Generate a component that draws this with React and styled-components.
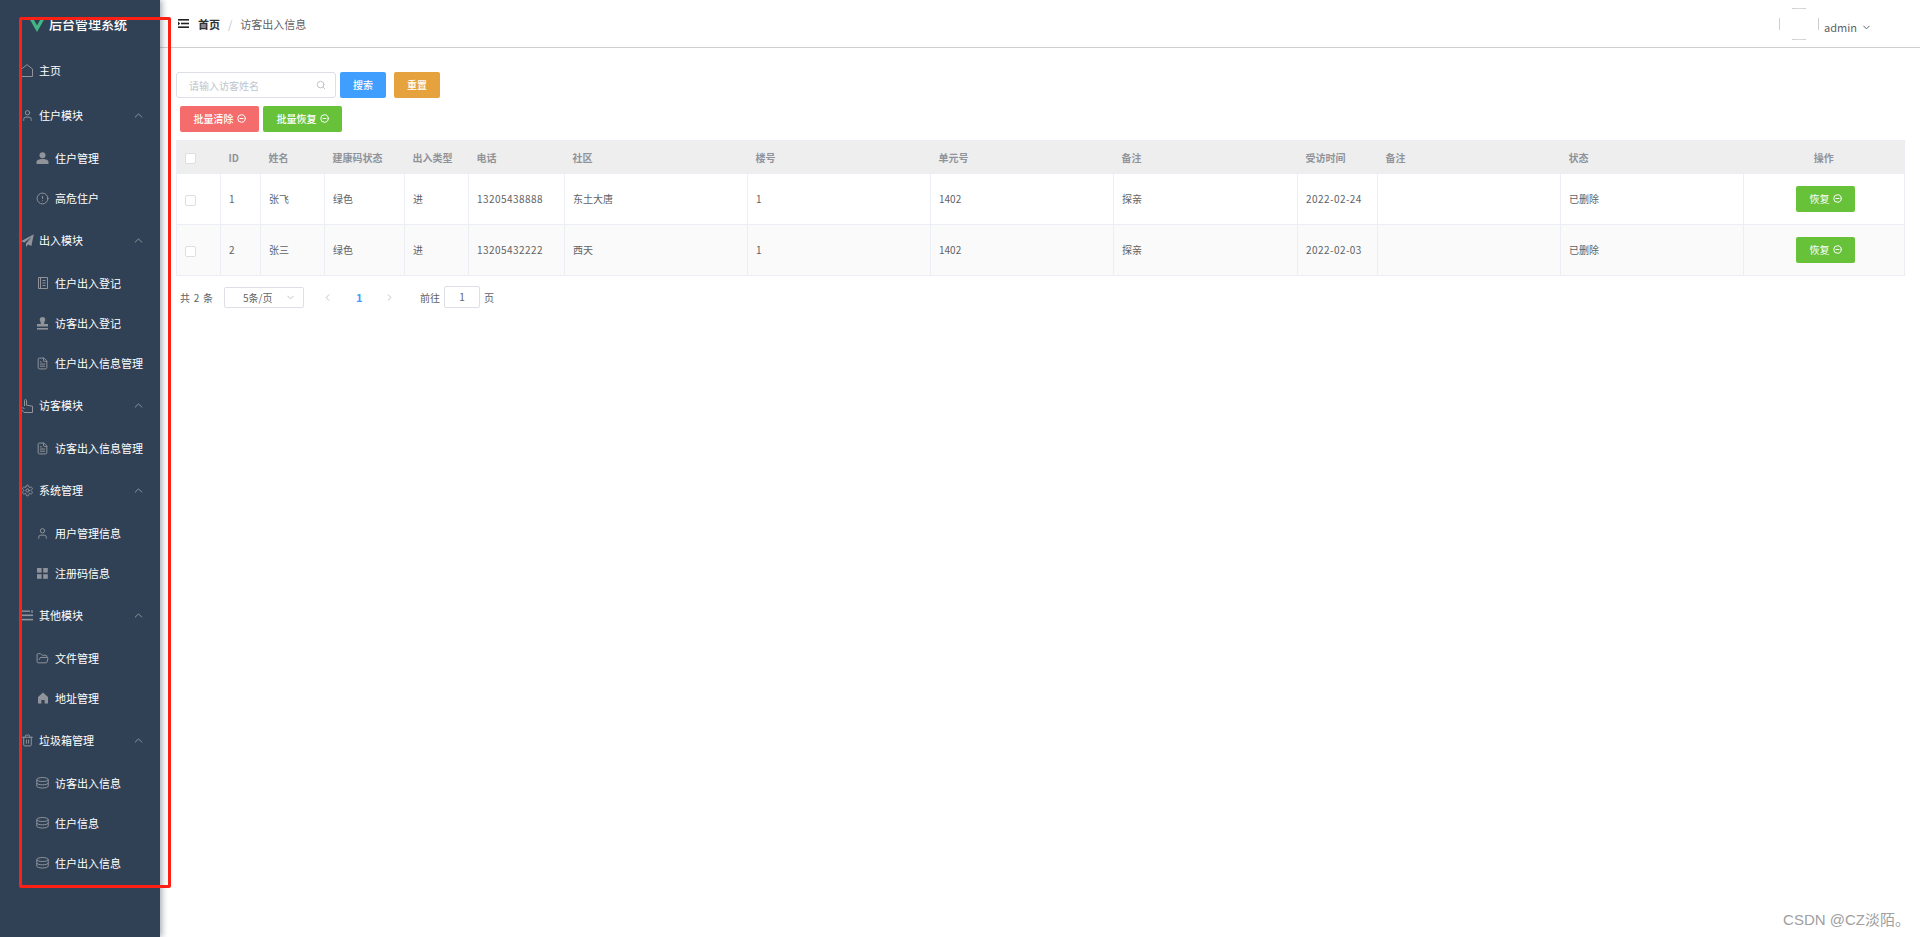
import React from "react";
import styled, { createGlobalStyle } from "styled-components";
import {
    ChevronUp,
    ChevronDown,
    ChevronLeft,
    ChevronRight,
    CircleAlert,
    CircleMinus,
    FileText,
    FolderOpen,
    Search,
    Settings,
    Trash2,
    User,
} from "lucide-react";

const HouseLine = () => (
    <svg width="13" height="13" viewBox="0 0 13 13" fill="none" stroke="currentColor">
        <path d="M0.5 12.5V5L6 0.7L11.5 5V12.5Z" />
    </svg>
);

const PersonFill = () => (
    <svg width="13" height="13" viewBox="0 0 13 13" fill="currentColor">
        <circle cx="6.5" cy="3.2" r="3" />
        <path d="M0.5 12V10C0.5 8 3 7 6.5 7S12.5 8 12.5 10V12Z" />
    </svg>
);

const PlaneFill = () => (
    <svg width="13" height="13" viewBox="0 0 13 13" fill="currentColor">
        <path d="M12.8 0.2L0 7.2L3.4 8.6L10.5 3L5 9.6V13L7 10.4L10.4 12Z" />
    </svg>
);

const Notebook = () => (
    <svg width="12" height="12" viewBox="0 0 12 12" fill="none" stroke="currentColor">
        <path d="M1.5 0.5H10.5V11.5H1.5ZM3.5 0.5V11.5M5.5 3.5H8.5M5.5 6H8.5M5.5 8.5H8.5" />
    </svg>
);

const StampFill = () => (
    <svg width="13" height="13" viewBox="0 0 13 13" fill="currentColor">
        <path d="M6.5 0C8.3 0 9.3 1.2 9.3 2.7C9.3 4 8.2 4.6 8.2 6V7H12V9.6H1V7H4.8V6C4.8 4.6 3.7 4 3.7 2.7C3.7 1.2 4.7 0 6.5 0Z" />
        <rect x="1" y="11" width="11" height="1.6" />
    </svg>
);

const ThumbLine = () => (
    <svg width="12" height="14" viewBox="0 0 12 14" fill="none" stroke="currentColor">
        <path d="M3.5 7V1.5C3.5 0.2 5.5 0.2 5.5 1.5V6.2L11.5 7.2V13.5H3L0.5 10.5V8.5L3.5 9.5" />
    </svg>
);

const GridFill = () => (
    <svg width="11" height="11" viewBox="0 0 11 11" fill="currentColor">
        <rect x="0" y="0" width="4.6" height="4.6" />
        <rect x="6.2" y="0" width="4.6" height="4.6" />
        <rect x="0" y="6.2" width="4.6" height="4.6" />
        <rect x="6.2" y="6.2" width="4.6" height="4.6" />
    </svg>
);

const BarsFill = () => (
    <svg width="12" height="11" viewBox="0 0 12 11" fill="currentColor">
        <rect x="0" y="0.5" width="9" height="1.4" />
        <rect x="10" y="0" width="2" height="3" opacity="0.6" />
        <rect x="0" y="4.5" width="12" height="1.6" />
        <rect x="0" y="8.8" width="12" height="1.6" />
    </svg>
);

const HomeFill = () => (
    <svg width="12" height="12" viewBox="0 0 12 12" fill="currentColor">
        <path d="M6 0.5L11 5V11.5H7.6V8H4.4V11.5H1V5Z" />
    </svg>
);

const Coins = () => (
    <svg width="13" height="12" viewBox="0 0 13 12" fill="none" stroke="currentColor">
        <ellipse cx="6.5" cy="2.5" rx="5.7" ry="2" />
        <path d="M0.8 2.5V9C0.8 10.2 3.3 11 6.5 11S12.2 10.2 12.2 9V2.5M0.8 5.8C0.8 7 3.3 7.8 6.5 7.8S12.2 7 12.2 5.8" />
    </svg>
);

const MenuToggle = () => (
    <svg width="11" height="9" viewBox="0 0 11 9" fill="#222">
        <rect x="0" y="0" width="11" height="1.6" />
        <rect x="3" y="3.7" width="8" height="1.6" />
        <path d="M0 2.6L2.2 4.5L0 6.4Z" />
        <rect x="0" y="7.4" width="11" height="1.6" />
    </svg>
);

// broken avatar image: only the four edge ticks of the circle show
const AvatarTicks = () => (
    <svg width="40" height="32" viewBox="0 0 40 32" fill="none" stroke="#cfcfcf">
        <path d="M13 0.5Q20 0 27 0.5M13 31.5Q20 32 27 31.5M0.5 10V22M39.5 10V22" />
    </svg>
);

const stroke = (Icon, size = 13) => <Icon size={size} strokeWidth={1} absoluteStrokeWidth />;

const menu = [
    { label: "主页", icon: <HouseLine /> },
    {
        label: "住户模块",
        icon: stroke(User),
        open: true,
        children: [
            { label: "住户管理", icon: <PersonFill /> },
            { label: "高危住户", icon: stroke(CircleAlert) },
        ],
    },
    {
        label: "出入模块",
        icon: <PlaneFill />,
        open: true,
        children: [
            { label: "住户出入登记", icon: <Notebook /> },
            { label: "访客出入登记", icon: <StampFill /> },
            { label: "住户出入信息管理", icon: stroke(FileText) },
        ],
    },
    {
        label: "访客模块",
        icon: <ThumbLine />,
        open: true,
        children: [{ label: "访客出入信息管理", icon: stroke(FileText) }],
    },
    {
        label: "系统管理",
        icon: stroke(Settings),
        open: true,
        children: [
            { label: "用户管理信息", icon: stroke(User) },
            { label: "注册码信息", icon: <GridFill /> },
        ],
    },
    {
        label: "其他模块",
        icon: <BarsFill />,
        open: true,
        children: [
            { label: "文件管理", icon: stroke(FolderOpen) },
            { label: "地址管理", icon: <HomeFill /> },
        ],
    },
    {
        label: "垃圾箱管理",
        icon: stroke(Trash2),
        open: true,
        children: [
            { label: "访客出入信息", icon: <Coins /> },
            { label: "住户信息", icon: <Coins /> },
            { label: "住户出入信息", icon: <Coins /> },
        ],
    },
];

const columns = [
    { key: "check", width: 44, label: "" },
    { key: "id", width: 40, label: "ID" },
    { key: "name", width: 64, label: "姓名" },
    { key: "health", width: 80, label: "建康码状态" },
    { key: "type", width: 64, label: "出入类型" },
    { key: "phone", width: 96, label: "电话", numeric: true },
    { key: "community", width: 183, label: "社区" },
    { key: "building", width: 183, label: "楼号" },
    { key: "unit", width: 183, label: "单元号" },
    { key: "remark", width: 184, label: "备注" },
    { key: "date", width: 80, label: "受访时间", numeric: true },
    { key: "note", width: 183, label: "备注" },
    { key: "status", width: 183, label: "状态" },
    { key: "action", width: 161, label: "操作" },
];

const rows = [
    {
        id: 1,
        name: "张飞",
        health: "绿色",
        type: "进",
        phone: "13205438888",
        community: "东土大唐",
        building: "1",
        unit: "1402",
        remark: "探亲",
        date: "2022-02-24",
        note: "",
        status: "已删除",
    },
    {
        id: 2,
        name: "张三",
        health: "绿色",
        type: "进",
        phone: "13205432222",
        community: "西天",
        building: "1",
        unit: "1402",
        remark: "探亲",
        date: "2022-02-03",
        note: "",
        status: "已删除",
    },
];

const App = () => {
    return (
        <Page>
            <GlobalStyle />
            <Sidebar>
                <Brand>
                    <LogoMark viewBox="0 0 16 14">
                        <path d="M0 0H16L8 14Z" fill="#41b883" />
                        <path d="M3.8 0H12.2L8 7.4Z" fill="#304156" />
                    </LogoMark>
                    <BrandTitle>后台管理系统</BrandTitle>
                </Brand>
                {menu.map((item) => (
                    <React.Fragment key={item.label}>
                        <MenuRow>
                            <MenuIcon>{item.icon}</MenuIcon>
                            <MenuLabel>{item.label}</MenuLabel>
                            {item.open && (
                                <MenuArrow>
                                    <ChevronUp size={13} strokeWidth={1} absoluteStrokeWidth />
                                </MenuArrow>
                            )}
                        </MenuRow>
                        {item.children &&
                            item.children.map((child) => (
                                <SubRow key={child.label}>
                                    <SubIcon>{child.icon}</SubIcon>
                                    <MenuLabel>{child.label}</MenuLabel>
                                </SubRow>
                            ))}
                    </React.Fragment>
                ))}
            </Sidebar>

            <Main>
                <Header>
                    <Crumbs>
                        <MenuToggle />
                        <CrumbHome>首页</CrumbHome>
                        <CrumbSlash>/</CrumbSlash>
                        <CrumbCurrent>访客出入信息</CrumbCurrent>
                    </Crumbs>
                    <UserBox>
                        <AvatarTicks />
                        <UserName>admin</UserName>
                        <UserArrow>
                            <ChevronDown size={11} strokeWidth={1} absoluteStrokeWidth />
                        </UserArrow>
                    </UserBox>
                </Header>

                <Content>
                    <SearchBar>
                        <SearchBox>
                            <SearchInput placeholder="请输入访客姓名" readOnly />
                            <Search size={10} strokeWidth={1} absoluteStrokeWidth color="#c0c4cc" />
                        </SearchBox>
                        <ActionButton $color="#409eff" $width={46}>
                            搜索
                        </ActionButton>
                        <ActionButton $color="#e6a23c" $width={46}>
                            重置
                        </ActionButton>
                    </SearchBar>

                    <BatchBar>
                        <ActionButton $color="#f56c6c" $width={79}>
                            批量清除 <CircleMinus size={9} strokeWidth={1} absoluteStrokeWidth />
                        </ActionButton>
                        <ActionButton $color="#67c23a" $width={79}>
                            批量恢复 <CircleMinus size={9} strokeWidth={1} absoluteStrokeWidth />
                        </ActionButton>
                    </BatchBar>

                    <Table>
                        <colgroup>
                            {columns.map((col) => (
                                <col key={col.key} width={col.width} />
                            ))}
                        </colgroup>
                        <thead>
                            <tr>
                                {columns.map((col) => (
                                    <HeadCell key={col.key} $center={col.key === "action"}>
                                        {col.key === "check" ? <CheckBox /> : col.label}
                                    </HeadCell>
                                ))}
                            </tr>
                        </thead>
                        <tbody>
                            {rows.map((row) => (
                                <BodyRow key={row.id}>
                                    {columns.map((col) => {
                                        if (col.key === "check") {
                                            return (
                                                <BodyCell key={col.key}>
                                                    <CheckBox />
                                                </BodyCell>
                                            );
                                        }
                                        if (col.key === "action") {
                                            return (
                                                <ActionCell key={col.key}>
                                                    <RowButton $color="#67c23a" $width={59}>
                                                        恢复 <CircleMinus size={9} strokeWidth={1} absoluteStrokeWidth />
                                                    </RowButton>
                                                </ActionCell>
                                            );
                                        }
                                        return (
                                            <BodyCell key={col.key} $numeric={col.numeric}>
                                                {row[col.key]}
                                            </BodyCell>
                                        );
                                    })}
                                </BodyRow>
                            ))}
                        </tbody>
                    </Table>

                    <Pager>
                        <PagerTotal>共 2 条</PagerTotal>
                        <SizeSelect>
                            <span>5条/页</span>
                            <ChevronDown size={11} strokeWidth={1} absoluteStrokeWidth color="#c0c4cc" />
                        </SizeSelect>
                        <PagerArrow $gap={8}>
                            <ChevronLeft size={11} strokeWidth={1} absoluteStrokeWidth />
                        </PagerArrow>
                        <PageNumber>1</PageNumber>
                        <PagerArrow $gap={12}>
                            <ChevronRight size={11} strokeWidth={1} absoluteStrokeWidth />
                        </PagerArrow>
                        <PagerJump>前往</PagerJump>
                        <JumpInput>1</JumpInput>
                        <PagerText>页</PagerText>
                    </Pager>
                </Content>
            </Main>

            <RedMark />
            <Watermark>CSDN @CZ淡陌。</Watermark>
        </Page>
    );
};

export default App;

const GlobalStyle = createGlobalStyle`
    html, body {
        margin: 0;
        padding: 0;
        background: #fff;
    }
    body {
        font-family: "Noto Sans CJK SC", "Noto Sans", sans-serif;
    }
`;

const Page = styled.div`
    position: relative;
    display: flex;
    width: 1920px;
    height: 937px;
    overflow: hidden;
`;

const Sidebar = styled.aside`
    position: relative;
    z-index: 1;
    width: 160px;
    flex-shrink: 0;
    background-color: #304156;
    box-shadow: 2px 0 6px rgba(0, 21, 41, 0.35);
`;

const Brand = styled.div`
    display: flex;
    align-items: center;
    gap: 4px;
    height: 48px;
    padding: 0 0 2px 29px;
    box-sizing: border-box;
`;

const LogoMark = styled.svg`
    width: 16px;
    height: 14px;
    margin-top: 4px;
`;

const BrandTitle = styled.span`
    font-size: 13px;
    font-weight: 500;
    color: #fff;
    white-space: nowrap;
`;

const MenuRow = styled.div`
    display: flex;
    align-items: center;
    height: 45px;
    padding-left: 20px;
    color: #fff;
`;

const SubRow = styled.div`
    display: flex;
    align-items: center;
    height: 40px;
    padding-left: 36px;
    color: #fff;
`;

const MenuIcon = styled.span`
    display: flex;
    justify-content: center;
    width: 14px;
    margin-right: 5px;
    color: #909399;
`;

const SubIcon = styled.span`
    display: flex;
    justify-content: center;
    width: 13px;
    margin-right: 6px;
    color: #909399;
`;

const MenuLabel = styled.span`
    margin-bottom: 1px;
    font-size: 11px;
    line-height: 14px;
    white-space: nowrap;
`;

const MenuArrow = styled.span`
    display: flex;
    margin-left: auto;
    margin-right: 15px;
    color: #909399;
`;

const Main = styled.main`
    flex: 1;
    min-width: 0;
`;

const Header = styled.header`
    display: flex;
    justify-content: space-between;
    align-items: center;
    height: 47px;
    padding: 0 48px 0 18px;
    border-bottom: 1px solid #cfcfcf;
`;

const Crumbs = styled.div`
    display: flex;
    align-items: center;
`;

const CrumbHome = styled.span`
    margin-left: 9px;
    font-size: 11px;
    font-weight: 700;
    color: #303133;
`;

const CrumbSlash = styled.span`
    margin: 0 8px;
    font-size: 11px;
    color: #c0c4cc;
`;

const CrumbCurrent = styled.span`
    font-size: 11px;
    color: #606266;
`;

const UserBox = styled.div`
    display: flex;
    align-items: center;
`;

const UserName = styled.span`
    margin: 7px 4px 0 5px;
    font-size: 11px;
    color: #606266;
`;

const UserArrow = styled.span`
    display: flex;
    margin-top: 7px;
    color: #606266;
`;

const Content = styled.div`
    padding: 24px 16px 0;
`;

const SearchBar = styled.div`
    display: flex;
    align-items: center;
    gap: 8px;
    height: 26px;
`;

const SearchBox = styled.div`
    display: flex;
    align-items: center;
    box-sizing: border-box;
    width: 160px;
    height: 26px;
    margin-right: -4px;
    padding: 0 9px 0 12px;
    border: 1px solid #dcdfe6;
    border-radius: 3px;
`;

const SearchInput = styled.input`
    flex: 1;
    min-width: 0;
    border: 0;
    outline: 0;
    padding: 0;
    font-family: inherit;
    font-size: 10px;
    color: #606266;

    &::placeholder {
        color: #c0c4cc;
    }
`;

const ActionButton = styled.button`
    display: flex;
    justify-content: center;
    align-items: center;
    gap: 3px;
    box-sizing: border-box;
    width: ${(props) => props.$width}px;
    height: 26px;
    padding: 0 0 2px;
    border: 0;
    border-radius: 2px;
    background-color: ${(props) => props.$color};
    color: #fff;
    font-family: inherit;
    font-size: 10px;
    font-weight: 500;
`;

const RowButton = styled(ActionButton)`
    margin: 0 auto;
    font-weight: 400;
`;

const BatchBar = styled.div`
    display: flex;
    gap: 4px;
    height: 26px;
    margin-top: 8px;
    padding-left: 4px;
`;

const Table = styled.table`
    width: 1728px;
    margin-top: 8px;
    table-layout: fixed;
    border-collapse: collapse;
    border: 1px solid #ebeef5;
`;

const HeadCell = styled.th`
    height: 33px;
    padding: 0 ${(props) => (props.$center ? 0 : 8)}px;
    box-sizing: border-box;
    background-color: #eeeeef;
    color: #909399;
    font-size: 10px;
    font-weight: 700;
    text-align: ${(props) => (props.$center ? "center" : "left")};
    vertical-align: middle;
`;

const BodyRow = styled.tr`
    &:nth-child(even) {
        background-color: #fafafa;
    }
`;

const BodyCell = styled.td`
    height: 51px;
    padding: 0 8px 1px;
    box-sizing: border-box;
    border: 1px solid #ebeef5;
    color: #606266;
    font-size: 10px;
    letter-spacing: ${(props) => (props.$numeric ? "0.45px" : "0")};
    vertical-align: middle;
`;

const ActionCell = styled.td`
    height: 51px;
    padding: 0 0 0 3px;
    box-sizing: border-box;
    border: 1px solid #ebeef5;
    text-align: center;
    vertical-align: middle;
`;

const CheckBox = styled.span`
    display: inline-block;
    box-sizing: border-box;
    width: 11px;
    height: 11px;
    border: 1px solid #dcdfe6;
    border-radius: 2px;
    background-color: #fff;
    vertical-align: middle;
`;

const Pager = styled.div`
    display: flex;
    align-items: center;
    height: 22px;
    margin-top: 10px;
    padding-left: 4px;
`;

const PagerText = styled.span`
    margin-left: 4px;
    font-size: 10px;
    color: #606266;
    white-space: pre;
`;

const PagerTotal = styled(PagerText)`
    width: 33px;
    margin-left: 0;
    word-spacing: 1.5px;
`;

const SizeSelect = styled.div`
    display: flex;
    justify-content: space-between;
    align-items: center;
    box-sizing: border-box;
    width: 80px;
    height: 21px;
    margin-left: 11px;
    padding: 0 7px 0 18px;
    border: 1px solid #dcdfe6;
    border-radius: 2px;
    font-size: 10px;
    color: #606266;
`;

const PagerArrow = styled.span`
    display: flex;
    justify-content: center;
    width: 30px;
    margin-left: ${(props) => props.$gap}px;
    color: #c0c4cc;
`;

const PageNumber = styled.span`
    width: 6px;
    margin-left: 14px;
    font-size: 11px;
    font-weight: 700;
    color: #409eff;
    text-align: center;
`;

const PagerJump = styled(PagerText)`
    margin-left: 16px;
`;

const JumpInput = styled.div`
    box-sizing: border-box;
    width: 36px;
    height: 22px;
    margin-left: 4px;
    border: 1px solid #dcdfe6;
    border-radius: 2px;
    font-size: 10px;
    line-height: 20px;
    color: #606266;
    text-align: center;
`;

/* red annotation drawn over the screenshot */
const RedMark = styled.div`
    position: absolute;
    z-index: 2;
    left: 19px;
    top: 17px;
    box-sizing: border-box;
    width: 152px;
    height: 871px;
    border: 3px solid #ff2015;
    border-radius: 2px;
    pointer-events: none;
`;

const Watermark = styled.div`
    position: absolute;
    z-index: 2;
    right: 10px;
    bottom: 8px;
    font-family: "Liberation Sans", "Noto Sans CJK SC", sans-serif;
    font-size: 15px;
    color: #a0a0a0;
    white-space: nowrap;
`;
